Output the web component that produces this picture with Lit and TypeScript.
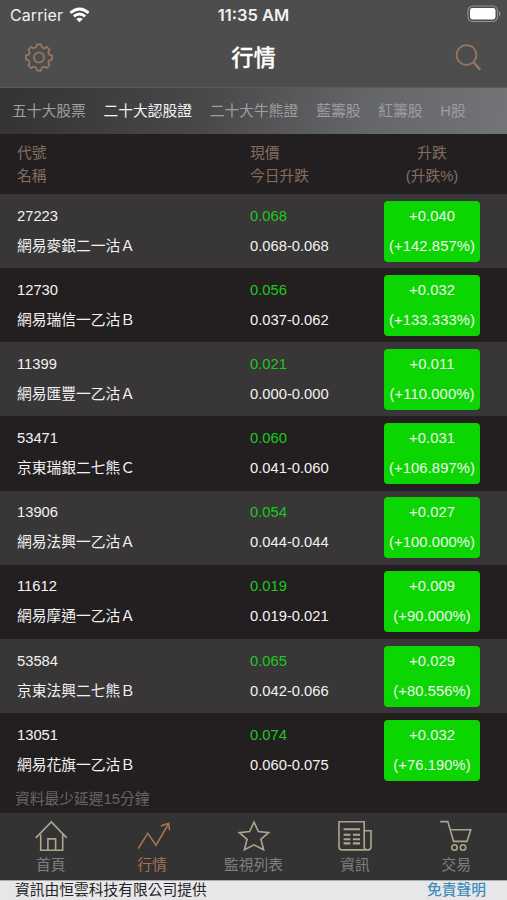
import { LitElement, html, css, svg } from "lit";
import { customElement, property, state } from "lit/decorators.js";
import { classMap } from "lit/directives/class-map.js";

interface Quote {
  code: string;
  name: string;
  price: string;
  range: string;
  change: string;
  percent: string;
}

const QUOTES: Quote[] = [
  { code: "27223", name: "網易麥銀二一沽Ａ", price: "0.068", range: "0.068-0.068", change: "+0.040", percent: "(+142.857%)" },
  { code: "12730", name: "網易瑞信一乙沽Ｂ", price: "0.056", range: "0.037-0.062", change: "+0.032", percent: "(+133.333%)" },
  { code: "11399", name: "網易匯豐一乙沽Ａ", price: "0.021", range: "0.000-0.000", change: "+0.011", percent: "(+110.000%)" },
  { code: "53471", name: "京東瑞銀二七熊Ｃ", price: "0.060", range: "0.041-0.060", change: "+0.031", percent: "(+106.897%)" },
  { code: "13906", name: "網易法興一乙沽Ａ", price: "0.054", range: "0.044-0.044", change: "+0.027", percent: "(+100.000%)" },
  { code: "11612", name: "網易摩通一乙沽Ａ", price: "0.019", range: "0.019-0.021", change: "+0.009", percent: "(+90.000%)" },
  { code: "53584", name: "京東法興二七熊Ｂ", price: "0.065", range: "0.042-0.066", change: "+0.029", percent: "(+80.556%)" },
  { code: "13051", name: "網易花旗一乙沽Ｂ", price: "0.074", range: "0.060-0.075", change: "+0.032", percent: "(+76.190%)" },
];

const CATEGORIES = ["五十大股票", "二十大認股證", "二十大牛熊證", "藍籌股", "紅籌股", "H股"];

const NAV = [
  { label: "首頁", icon: svg`<path d="M2.8 18.9 18.3 3 33.8 18.9M7.7 15.5V31.2H29.7V15.5M14.9 31.2V19.9H22.6V31.2"/>` },
  { label: "行情", icon: svg`<path d="M3.2 29.5 12.8 14.4 21 26.2 33.2 5.4M25.8 7 33.6 4.3 34.6 11.5"/>` },
  { label: "監視列表", icon: svg`<path d="M18 3.2 22.4 12.6 32.6 13.6 24.9 20.3 27.6 30.8 18 25.8 8.4 30.8 11.1 20.3 3.3 13.6 13.6 12.6Z"/>` },
  { label: "資訊", icon: svg`<path d="M27.2 27.6V2.7H2V28Q2 30.9 5 30.9H31Q34 30.9 34 27.8V11.8H27.2V27.8Q27.2 30.9 30 30.9"/><path stroke-width="2.1" d="M6.6 10.2H23M6.6 15.8H13.4M15.9 15.8H23M6.6 20.2H13.4M15.9 20.2H23M6.6 24.4H13.4M15.9 24.4H23"/>` },
  { label: "交易", icon: svg`<path d="M1.2 2.6H8.8L14.6 22.4H28L31.8 10.8H12.2"/><circle cx="15.5" cy="28.5" r="2.7"/><circle cx="24" cy="28.5" r="2.7"/>` },
];

/* Eight-toothed cog with rounded valleys. */
const gearPath = (() => {
  const teeth = 8;
  const at = (a: number, r: number) => `${(15 + r * Math.cos(a)).toFixed(2)} ${(15 + r * Math.sin(a)).toFixed(2)}`;
  let d = "";
  for (let i = 0; i < teeth; i++) {
    const a = (i * 2 * Math.PI) / teeth - Math.PI / 2;
    d += `${i ? "L" : "M"}${at(a - 0.16, 13.2)}L${at(a + 0.16, 13.2)}L${at(a + 0.2, 11.6)}Q${at(a + Math.PI / 8, 9.4)} ${at(a + Math.PI / 4 - 0.2, 11.6)}`;
  }
  return d + "Z";
})();

@customElement("status-bar")
class StatusBar extends LitElement {
  static styles = css`
    :host { display: grid; grid-template-columns: 1fr auto 1fr; align-items: center; height: 30px; padding: 0 6px 0 10px; color: #f0f0f0; font: 16px/20px Inter, sans-serif; }
    .carrier { display: flex; align-items: center; gap: 6px; }
    .carrier span { letter-spacing: 0.1px; }
    .time { font-weight: 600; font-size: 16.5px; padding-right: 4px; }
    .battery { justify-self: end; margin-top: -2px; }
    svg { display: block; }
  `;
  render() {
    return html`
      <div class="carrier">
        <span>Carrier</span>
        <svg width="21" height="16" viewBox="0 0 21 16" fill="none" stroke="#fff" stroke-width="2.8">
          <path d="M1.4 5.9Q10.5-2 19.6 5.9M4.8 9.4Q10.5 4.5 16.2 9.4"/>
          <path d="M7.2 12Q10.5 9.3 13.8 12L10.5 15.3Z" fill="#fff" stroke="none"/>
        </svg>
      </div>
      <div class="time">11:35 AM</div>
      <svg class="battery" width="34" height="18" viewBox="0 0 34 18">
        <rect x="1" y="1" width="29.5" height="15.5" rx="4.8" fill="none" stroke="#929292" stroke-width="1.1"/>
        <rect x="3" y="3" width="25.5" height="11.5" rx="2.4" fill="#fff"/>
        <path d="M32 6V11.5Q33.5 10.5 33.5 8.7T32 6Z" fill="#929292"/>
      </svg>`;
  }
}

@customElement("quote-row")
class QuoteRow extends LitElement {
  @property({ attribute: false }) quote!: Quote;
  static styles = css`
    :host { display: grid; grid-template-columns: 233px 134px 96px; height: 74.15px; padding: 6.7px 0 0 17px; box-sizing: border-box; color: #f2f2f2; font-size: 14.75px; line-height: 30px; white-space: nowrap; }
    .price { color: #1bc91b; }
    .change { height: 61px; border-radius: 4px; background: #0cd602; text-align: center; letter-spacing: 0.1px; }
  `;
  render() {
    const q = this.quote;
    return html`
      <div><div>${q.code}</div><div>${q.name}</div></div>
      <div><div class="price">${q.price}</div><div>${q.range}</div></div>
      <div class="change"><div>${q.change}</div><div>${q.percent}</div></div>`;
  }
}

@customElement("app-root")
class AppRoot extends LitElement {
  @state() private category = 1;
  @state() private section = 1;

  static styles = css`
    :host { display: flex; flex-direction: column; width: 507px; height: 900px; overflow: hidden; background: #231f20; font-family: "Liberation Sans", "Noto Sans CJK TC", sans-serif; font-size: 14.75px; }
    .top { height: 87px; background: #4d4d4d; flex: none; box-sizing: border-box; }
    .title { display: flex; justify-content: space-between; align-items: center; height: 55px; padding: 0 24px; color: #fff; font-size: 22.2px; }
    .title svg { stroke: #9c7563; fill: none; stroke-width: 1.7; }
    .title span { font-family: "Noto Sans CJK TC", sans-serif; font-weight: 500; -webkit-text-stroke: 0.3px #fff; padding-bottom: 3px; }
    .tabs { display: flex; gap: 17.8px; align-items: center; height: 47px; flex: none; box-sizing: border-box; padding: 0 12px 4px; border-top: 1px solid #5a5a5b; background: linear-gradient(100deg, #343233 0%, #48484a 40%, #656669 72%, #727478 100%); color: #9e9e9e; white-space: nowrap; }
    .tab.active { color: #f2f2f2; }
    .head { display: grid; grid-template-columns: 233px 134px 96px; height: 60px; flex: none; box-sizing: border-box; padding: 7.5px 0 0 17px; color: #846e61; line-height: 23px; }
    .head .center { text-align: center; }
    .list { flex: none; height: 593px; }
    .odd { background: #383637; }
    .delay { flex: 1; padding: 0 15px; line-height: 24px; color: #686566; }
    .nav { display: grid; grid-template-columns: repeat(5, 1fr); height: 67px; flex: none; background: #333; color: #7f7f7f; }
    .item { display: flex; flex-direction: column; align-items: center; padding-top: 6px; line-height: 22px; }
    .item svg { fill: none; stroke: #afa58d; stroke-width: 1.6; }
    .item.active { color: #a37456; }
    .item.active svg { stroke: #a37456; }
    .footer { display: flex; justify-content: space-between; height: 20px; flex: none; box-sizing: border-box; padding: 0 21px 0 15px; border-top: 1px solid #aaa; background: #e7e7ea; color: #242424; line-height: 18px; }
    .link { color: #3f8fb8; font-weight: 500; }
  `;

  render() {
    return html`
      <header class="top">
        <status-bar></status-bar>
        <div class="title">
          <svg width="30" height="30" viewBox="0 0.5 30 30" stroke-linejoin="round"><path d=${gearPath}/><circle cx="15" cy="15" r="5"/></svg>
          <span>行情</span>
          <svg width="30" height="30" viewBox="0 0.5 30 30"><circle cx="13.5" cy="12.5" r="9.9"/><path d="M20.3 19.6 27.3 27.2" stroke-width="2.2"/></svg>
        </div>
      </header>
      <nav class="tabs">
        ${CATEGORIES.map((c, i) => html`<div class=${classMap({ tab: true, active: i === this.category })} @click=${() => (this.category = i)}>${c}</div>`)}
      </nav>
      <div class="head">
        <div>代號<br>名稱</div>
        <div>現價<br>今日升跌</div>
        <div class="center">升跌<br>(升跌%)</div>
      </div>
      <main class="list">
        ${QUOTES.map((q, i) => html`<quote-row class=${classMap({ odd: i % 2 === 0 })} .quote=${q}></quote-row>`)}
      </main>
      <div class="delay">資料最少延遲15分鐘</div>
      <nav class="nav">
        ${NAV.map((n, i) => html`
          <div class=${classMap({ item: true, active: i === this.section })} @click=${() => (this.section = i)}>
            <svg width="35" height="35" viewBox="0 0 35 35">${n.icon}</svg>
            <span>${n.label}</span>
          </div>`)}
      </nav>
      <footer class="footer"><span>資訊由恒雲科技有限公司提供</span><span class="link">免責聲明</span></footer>`;
  }
}
